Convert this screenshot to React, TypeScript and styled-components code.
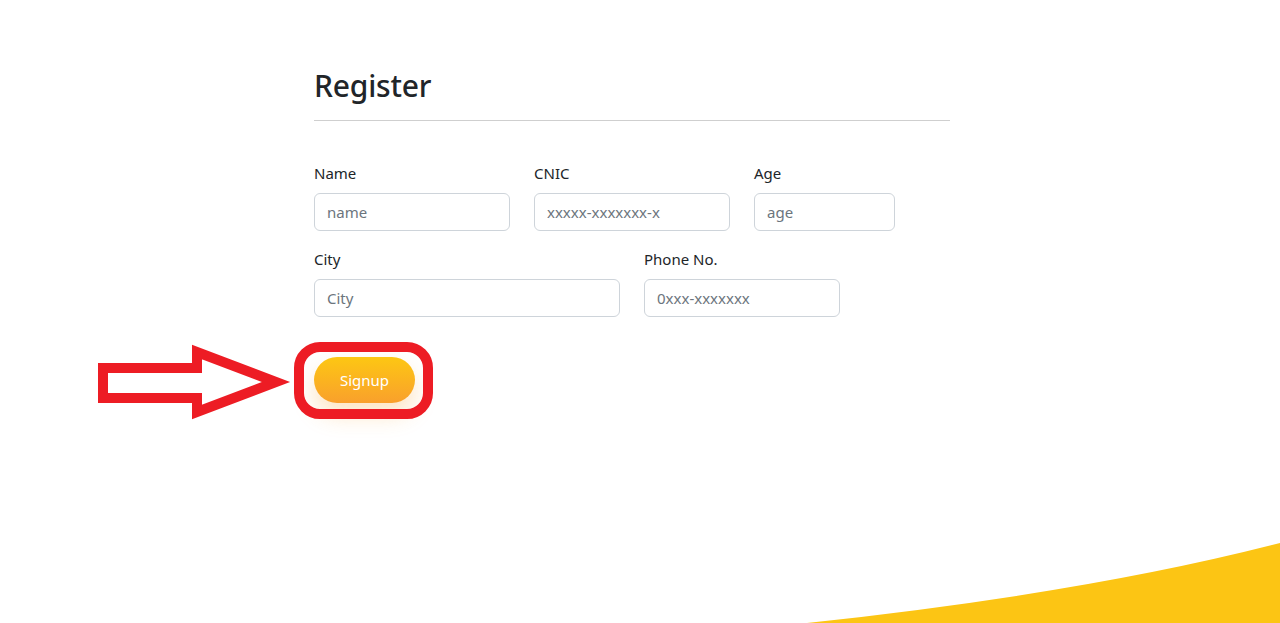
import React from 'react';
import styled, { createGlobalStyle } from 'styled-components';

const GlobalStyle = createGlobalStyle`
  html, body {
    margin: 0;
    padding: 0;
    background: #ffffff;
    overflow: hidden;
  }
  body {
    font-family: 'Noto Sans', 'Open Sans', sans-serif;
    color: #212529;
  }
  * {
    box-sizing: border-box;
  }
`;

const Page = styled.div`
  position: relative;
  width: 1280px;
  height: 623px;
  overflow: hidden;
`;

const Container = styled.div`
  width: 636px;
  margin-left: 314px;
  padding-top: 68px;
`;

const Title = styled.h2`
  margin: 0;
  font-size: 30px;
  font-weight: 500;
  line-height: 1.2;
  letter-spacing: -0.2px;
`;

const Divider = styled.hr`
  margin: 16px 0 40px;
  border: 0;
  border-top: 1px solid #cfcfcf;
`;

const Row = styled.div`
  display: flex;
  gap: 24px;
  margin-bottom: 16px;
`;

const Field = styled.div<{ w: number }>`
  display: flex;
  flex-direction: column;
  width: ${(p) => p.w}px;
`;

const Label = styled.label`
  font-size: 15px;
  line-height: 24px;
  margin-bottom: 8px;
`;

const Input = styled.input`
  height: 38px;
  padding: 6px 12px;
  font-family: inherit;
  font-size: 15px;
  color: #212529;
  border: 1px solid #ced4da;
  border-radius: 6px;
  outline: none;
  &::placeholder {
    color: #6c757d;
  }
`;

const ButtonWrap = styled.div`
  position: relative;
  margin-top: 40px;
  width: 101px;
`;

const SignupButton = styled.button`
  width: 101px;
  height: 46px;
  border: 0;
  border-radius: 23px;
  font-family: inherit;
  font-size: 15px;
  color: #ffffff;
  background: linear-gradient(180deg, #fdc713 0%, #f9a02c 100%);
  box-shadow: 0 12px 22px rgba(249, 160, 44, 0.28);
  cursor: pointer;
`;

const Ring = styled.div`
  position: absolute;
  left: -20px;
  top: -15px;
  width: 139px;
  height: 77px;
  border: 10px solid #ed1c24;
  border-radius: 26px;
  pointer-events: none;
`;

const Arrow = styled.svg`
  position: absolute;
  left: -216px;
  top: -15px;
  pointer-events: none;
`;

const Wave = styled.svg`
  position: absolute;
  right: 0;
  bottom: 0;
`;

export default function App() {
  return (
    <Page>
      <GlobalStyle />
      <Container>
        <Title>Register</Title>
        <Divider />
        <Row>
          <Field w={196}>
            <Label>Name</Label>
            <Input placeholder="name" />
          </Field>
          <Field w={196}>
            <Label>CNIC</Label>
            <Input placeholder="xxxxx-xxxxxxx-x" />
          </Field>
          <Field w={141}>
            <Label>Age</Label>
            <Input placeholder="age" />
          </Field>
        </Row>
        <Row>
          <Field w={306}>
            <Label>City</Label>
            <Input placeholder="City" />
          </Field>
          <Field w={196}>
            <Label>Phone No.</Label>
            <Input placeholder="0xxx-xxxxxxx" />
          </Field>
        </Row>
        <ButtonWrap>
          <SignupButton>Signup</SignupButton>
          <Ring />
          <Arrow width="200" height="90" viewBox="0 0 200 90">
            <polygon
              points="5,26 99,26 99,10 178,40 99,70 99,56 5,56"
              fill="none"
              stroke="#ed1c24"
              strokeWidth="10"
              strokeLinejoin="miter"
            />
          </Arrow>
        </ButtonWrap>
      </Container>
      <Wave width="473" height="80" viewBox="0 0 473 80">
        <path d="M0 80 Q 280 50 473 0 L473 80 Z" fill="#fcc514" />
      </Wave>
    </Page>
  );
}
